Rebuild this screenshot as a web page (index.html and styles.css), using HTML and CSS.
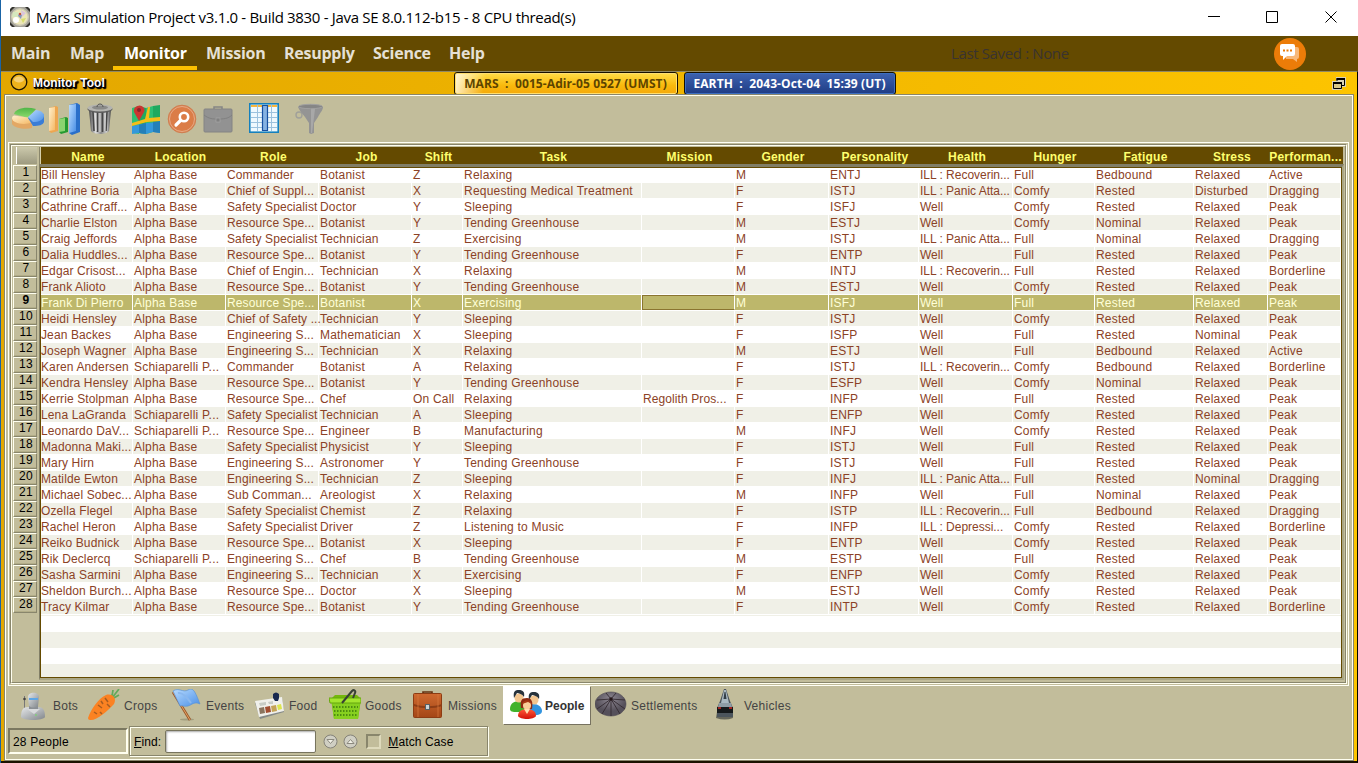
FILE: index.html
```html
<!DOCTYPE html>
<html lang="en">
<head>
<meta charset="utf-8">
<title>Mars Simulation Project</title>
<link rel="stylesheet" href="styles.css">
</head>
<body>
<svg width="0" height="0" class="defs">
  <defs>
    <linearGradient id="gBlue" x1="0" x2="1" y1="0" y2="1"><stop offset="0" stop-color="#b9dcff"/><stop offset="1" stop-color="#4a8fe6"/></linearGradient>
    <linearGradient id="gPeach" x1="0" x2="1" y1="0" y2="1"><stop offset="0" stop-color="#fff0cc"/><stop offset="1" stop-color="#f5b865"/></linearGradient>
    <linearGradient id="gGreen" x1="0" x2="0" y1="0" y2="1"><stop offset="0" stop-color="#4fb548"/><stop offset="1" stop-color="#8edc6e"/></linearGradient>
    <linearGradient id="gSteel" x1="0" x2="1"><stop offset="0" stop-color="#444"/><stop offset=".3" stop-color="#ddd"/><stop offset=".55" stop-color="#888"/><stop offset=".8" stop-color="#ccc"/><stop offset="1" stop-color="#444"/></linearGradient>
    <linearGradient id="gBot" x1="0" x2="1" y1="0" y2="1"><stop offset="0" stop-color="#e6e8ea"/><stop offset="1" stop-color="#80858a"/></linearGradient>
    <radialGradient id="gDome" cx=".5" cy=".3"><stop offset="0" stop-color="#8d8792"/><stop offset="1" stop-color="#55505a"/></radialGradient>
    <linearGradient id="gRed" x1="0" x2="0" y1="0" y2="1"><stop offset="0" stop-color="#ff5a3a"/><stop offset="1" stop-color="#d31208"/></linearGradient>
    <linearGradient id="gCase" x1="0" x2="0" y1="0" y2="1"><stop offset="0" stop-color="#cf6a30"/><stop offset="1" stop-color="#a44616"/></linearGradient>
  </defs>
</svg>
<div class="window">
  <header class="titlebar">
    <svg class="app-icon" viewBox="0 0 20 20"><path d="M0 3l3-3h14l3 3v14l-3 3H3l-3-3z" fill="#a3a198"/><path d="M0 5V2l2-2h3zM15 0h3l2 2v3zM0 15v3l2 2h3zM20 15v3l-2 2h-3z" fill="#35342f"/><circle cx="10" cy="10" r="9" fill="#cfcbb4"/><circle cx="10" cy="10" r="7.600" fill="#ece7b8"/><path d="M3 5h5v5H2z" fill="#d5e7bd"/><path d="M11 3l5 3-4 4z" fill="#d9c4dd"/><circle cx="6" cy="13" r="3" fill="#fff"/><path d="M11 12l5-1-3 5z" fill="#d8de6f"/><path d="M9 6l3 2-1 4-3-3z" fill="#8797bd"/><circle cx="10" cy="7" r="1.200" fill="#c9533c"/></svg>
    <span class="app-title">Mars Simulation Project v3.1.0 - Build 3830 - Java SE 8.0.112-b15 - 8 CPU thread(s)</span>
    <svg class="win-buttons" viewBox="0 0 130 16"><path d="M1 7.500h12M59.500 2.500h11v11h-11zM118.500 2.500l11 11M129.500 2.500l-11 11" fill="none" stroke="#000"/></svg>
  </header>
  <nav class="menubar">
    <span class="menu m-main">Main</span><span class="menu m-map">Map</span><span class="menu m-monitor active">Monitor</span><span class="menu m-mission">Mission</span><span class="menu m-resupply">Resupply</span><span class="menu m-science">Science</span><span class="menu m-help">Help</span>
    <span class="saved">Last Saved : None</span>
    <svg class="chat" viewBox="0 0 32 32"><circle cx="16" cy="16" r="16" fill="#ec7c08"/><path d="M12 9h11q2 0 2 2v8q0 2-2 2v3l-4-3h-7z" fill="#f8b878"/><path d="M8 6h11q2 0 2 2v8q0 2-2 2h-6l-4 4v-4H8q-2 0-2-2V8q0-2 2-2z" fill="#fff"/><path d="M9 11.500h2v2H9zM12.500 11.500h2v2h-2zM16 11.500h2v2h-2z" fill="#ec7c08"/></svg>
  </nav>
  <main class="desktop">
    <div class="toolbar-title">
      <svg class="orb" viewBox="0 0 18 18"><circle cx="9" cy="9" r="7.800" fill="#edb21c" stroke="#1a1300" stroke-width="1.300"/><ellipse cx="9" cy="6.500" rx="5" ry="3" fill="#f5cf72"/></svg>
      <span class="tool-name">Monitor Tool</span>
      <span class="clock mars">MARS&nbsp; :&nbsp; 0015-Adir-05 0527 (UMST)</span>
      <span class="clock earth">EARTH&nbsp; :&nbsp; 2043-Oct-04&nbsp; 15:39 (UT)</span>
      <svg class="restore" viewBox="0 0 14 13"><path d="M0 4h4V0h10v10h-4v3H0z" fill="#d9d2b8"/><path d="M5 4V1.500h7.500v7H10" fill="none" stroke="#000"/><path d="M4.500 1H13v2H4.500z"/><path d="M1.500 5.500h8v6h-8z" fill="#d9c88a" stroke="#000"/><path d="M1 5h9v2H1z"/></svg>
    </div>
    <div class="frame">
      <div class="tools">
        <svg class="t-pie" viewBox="0 0 32 32"><path d="M0 15v6c2 4 13 6 20 4v-7z" fill="#e3a864"/><path d="M2 11c1-5 11-8 22-5l-8 9z" fill="url(#gGreen)"/><path d="M0 15q0-2 2-2.500l14 2 4 5c-8 3-20 1-20-4.500z" fill="url(#gPeach)"/><path d="M16 15l8-7c7 1 9 4 8 7v4c-1 3-5 4-11 4z" fill="#3a7dd6"/><path d="M16 14l8-7c7 1 8 4 8 6-1 4-5 6-11 6z" fill="url(#gBlue)"/></svg>
        <svg class="t-bar" viewBox="0 0 32 32"><path d="M1 5l7-2 2 1v24l-7 2-2-2z" fill="#eda650"/><path d="M1 5l6-1v23l-6 1z" fill="url(#gPeach)"/><path d="M11 16l7-2 2 1v14l-7 2-2-2z" fill="#259a30"/><path d="M11 16l6-1v13l-6 1z" fill="#8bd470"/><path d="M21 2l8-2 3 2v27l-8 3-3-2z" fill="#2a6fc9"/><path d="M21 2l7-1v27l-7 2z" fill="url(#gBlue)"/></svg>
        <svg class="t-trash" viewBox="0 0 28 32"><path d="M3 7h22l-2 21c-3 4-15 4-18 0z" fill="url(#gSteel)"/><path d="M7 9l1 19M11.500 9v20M16.500 9v20M21 9l-1 19" stroke="#454545" stroke-width="1.600"/><path d="M9 9l1 19M14 9v20M19 9v19" stroke="#ddd"/><ellipse cx="14" cy="6" rx="12.500" ry="4" fill="#5d5d5d"/><ellipse cx="14" cy="5" rx="12.500" ry="3.500" fill="#b4b4b0"/><ellipse cx="14" cy="4.500" rx="8" ry="2" fill="#8a8a88"/><path d="M11 4c0-4 6-4 6 0" stroke="#555" fill="none"/></svg>
        <svg class="t-map" viewBox="0 0 28 30"><path d="M0 4l7-2v28l-7-1z" fill="#2ebf72"/><path d="M7 2l7 2v26l-7-1z" fill="#20a95f"/><path d="M14 4l7-2v26l-7 2z" fill="#2ebf72"/><path d="M21 2l7-1v26l-7 1z" fill="#20a95f"/><path d="M0 22l15-3 13-1v11l-7-1-7 2-7-1-7 1z" fill="#3498db"/><path d="M7 21l7-2v11l-7-1zM21 18l7-1v12l-7-1z" fill="#257fb8"/><path d="M0 19l13-4 3-12h2l-1 11 11-1v4l-13 1-15 4z" fill="#f5bd18"/><path d="M7 17L2 8a5.500 5.500 0 0110-4q1 2 0 4z" fill="#c93632"/><circle cx="7" cy="6" r="2" fill="#86242a"/></svg>
        <svg class="t-find" viewBox="0 0 30 30"><circle cx="15" cy="15" r="13.800" fill="#db7d48" stroke="#cf7d50"/><circle cx="15" cy="15" r="12.500" fill="none" stroke="#e9b596" stroke-width=".8"/><circle cx="17" cy="13" r="4.200" fill="none" stroke="#fff" stroke-width="2.600"/><path d="M13.500 16.500l-4.500 4.500" stroke="#fff" stroke-width="3.200" stroke-linecap="round"/></svg>
        <svg class="t-case" viewBox="0 0 30 27"><path d="M11 3V1h8v2" fill="none" stroke="#858585" stroke-width="1.500"/><rect x="1" y="3" width="28" height="23" rx="1" fill="#929292" stroke="#848484"/><path d="M1 9c5 4 9 4 14 4s10 0 14-4" fill="none" stroke="#808080"/><rect x="13" y="12" width="4" height="4" fill="#808080" stroke="#aaa" stroke-width=".6"/></svg>
        <svg class="t-grid" viewBox="0 0 30 30"><rect x=".8" y=".8" width="28.400" height="28.400" fill="#eff9fe" stroke="#1580bd" stroke-width="1.600"/><path d="M2 2h26v2H2z" fill="#f6b63d"/><path d="M2 9.500h26M2 14.500h26M2 19.500h26M2 24.500h26M8.500 2v26M22.500 2v26" stroke="#9cc2de"/><path d="M13.500 2.500h5v25h-5z" fill="#86b2e2" stroke="#174fa0" stroke-width="1.200"/></svg>
        <svg class="t-funnel" viewBox="0 0 30 32"><circle cx="4" cy="12" r="3" fill="none" stroke="#a0a09a" stroke-width="1.400"/><path d="M3 4h25c0 3-3 6-5 10l-4 6v10l-3 1-2-1V20l-4-6C7 10 4 7 3 4z" fill="#949494"/><path d="M16 6h4l-3 24h-1z" fill="#a8a8a8"/><ellipse cx="15.500" cy="3.500" rx="12" ry="2.200" fill="#868686" stroke="#a1a1a1"/></svg>
      </div>
      <section class="panel"><div class="etch"><div class="etch-in">
        <div class="row-head"><div class="corner"></div><div id="nums"></div></div>
        <div class="table">
          <div class="grid head" id="head"></div>
          <div class="body-frame"><div class="body" id="body"></div></div>
        </div>
      </div></div></section>
      <div class="tabs">
        <div class="tab w1"><svg viewBox="0 0 32 32"><path d="M7.500 7v15" stroke="#777"/><circle cx="7.500" cy="10" r="1.300" fill="#444"/><path d="M4 28c0-7 2-10 7-10h10c5 0 7 3 7 10-2 4-22 4-24 0z" fill="url(#gBot)"/><path d="M12 15h9v6h-9z" fill="#8b9095"/><path d="M11 9c-1-7 12-7 11 0l-1 8q-4.500 3-9 0z" fill="url(#gBot)"/><path d="M12 9h9v2h-9z" fill="#5fa6e4"/><path d="M10 20h13l-6 5z" fill="#d8dadc"/><circle cx="19" cy="26" r="1" fill="#7fce7a"/></svg><span>Bots</span></div>
        <div class="tab w2"><svg viewBox="0 0 32 32"><path d="M22 10c3-4 3-6 3-9M24 9l7-9M24 10l7-4" stroke="#62a95a" stroke-width="1.700" fill="none"/><path d="M0 29C3 20 11 9 18 6c7-2 11 4 8 9C20 22 8 32 2 31q-2 0-2-2z" fill="#fb8222"/><path d="M10 16l4 3M17 9l3 4M22 18l-3-3M6 23l3 2M14 25l-2-2M13 12l2 3" stroke="#a75c20" stroke-width="1.500"/></svg><span>Crops</span></div>
        <div class="tab w3"><svg viewBox="0 0 32 32"><ellipse cx="17" cy="30.500" rx="7" ry="1" fill="#a19d7e"/><path d="M3 3l17 28" stroke="#9b562b" stroke-width="2.600"/><path d="M3 3l17 28" stroke="#e2a462" stroke-width="1"/><path d="M3 2c6-4 10 2 15-1s7 1 12 14c-6-3-8 1-12 2s-6-1-8 0z" fill="url(#gBlue)" stroke="#5c93d3" stroke-width=".7"/><path d="M8 4c5-1 9 4 13 10" stroke="#8ab8ee" stroke-width="2" fill="none"/></svg><span>Events</span></div>
        <div class="tab w4"><svg viewBox="0 0 32 32"><path d="M2 14l27-5 2 14-24 7z" fill="#858a88"/><path d="M2 12l27-4 2 14-25 6z" fill="#f0f0eb"/><path d="M6 19l5-1 1 6-5 1z" fill="#8a755f"/><path d="M12 18l5-1 1 6-5 1z" fill="#a24e31"/><path d="M18 17l5-1 1 6-5 1z" fill="#c5a355"/><path d="M24 16l4-1 1 5-4 1z" fill="#dce64e"/><path d="M6 14l7-1v3l-6 1zM15 13l5-1v3h-4z" fill="#c8ccc5"/><path d="M20 5q3-3 6 0v4l-1 3h-3l-2-3z" fill="#19294f"/></svg><span>Food</span></div>
        <div class="tab w5"><svg viewBox="0 0 32 32"><path d="M2 10l4-4h22l4 4-3 20H5z" fill="#75b80c"/><path d="M3 14h28l-2 16H5z" fill="#86d01f"/><path d="M0 9h32v5H1z" fill="#a4e62e" stroke="#66a60e"/><path d="M4 18h25M5 22h24M5 26h23" stroke="#4d8c10" stroke-width="1.800" stroke-dasharray="1.500 1.500"/><path d="M13 14L23 2c2-2 4 0 3 2l-2 5" stroke="#384035" stroke-width="2" fill="none"/></svg><span>Goods</span></div>
        <div class="tab w6"><svg viewBox="0 0 32 32"><path d="M11 5V3h9v2" fill="none" stroke="#64300f" stroke-width="1.600"/><rect x="1.500" y="4.500" width="28" height="24" rx="1" fill="url(#gCase)" stroke="#8d3c13"/><path d="M2 15c8 3 20 3 28 0v2c-8 3-20 3-28 0z" fill="#8d3d16"/><path d="M6 5v23M26 5v23" stroke="#d97b41" stroke-width=".7"/><rect x="13.500" y="15.500" width="4" height="5" fill="#ccd4d6" stroke="#566065"/></svg><span>Missions</span></div>
        <div class="tab w7 selected"><svg viewBox="0 0 32 32"><path d="M0 19c0-6 5-8 9-8s8 3 8 7l-5 4c-5 0-12 1-12-3z" fill="#41b22b"/><path d="M16 21c0-6 4-7 8-7s8 3 8 7c0 5-10 5-16 3z" fill="#3294df"/><circle cx="9" cy="8" r="4.500" fill="#f3c58e"/><path d="M4 8c-1-7 1-8 5-8s6 2 5 7c-2-3-5-4-7-4z" fill="#28333c"/><circle cx="24" cy="10" r="4.500" fill="#f3c58e"/><path d="M19 10c-1-7 1-8 5-8s6 2 5 7c-2-3-5-4-7-4z" fill="#28333c"/><path d="M11 18c-1-7 0-10 6-10 5 0 6 4 5 11z" fill="#8d2a12"/><circle cx="17" cy="15.500" r="4" fill="#f9cf98"/><path d="M12 14c2-5 8-5 10 0l-4-2z" fill="#aa3914"/><path d="M8 26c0-5 4-7 9-7s9 2 9 7c-2 4-16 4-18 0z" fill="url(#gRed)"/><path d="M14 19h6l-3 5z" fill="#ffe0b0"/></svg><span>People</span></div>
        <div class="tab w8"><svg viewBox="0 0 32 32"><path d="M0 15C0 8 8 3 16 3s15 5 15 12-7 12-15 12S0 22 0 15z" fill="url(#gDome)" stroke="#4b4650" stroke-width=".6"/><path d="M16 10L2 11M16 10L2 20M16 10L7 25M16 10v17M16 10l9 15M16 10l14 10M16 10l14 1M16 10l-5-6M16 10l5-6" stroke="#332a31" stroke-width=".9"/><circle cx="16" cy="10" r="1.700" fill="#251619"/></svg><span>Settlements</span></div>
        <div class="tab w9"><svg viewBox="0 0 32 32"><path d="M9 23q7-3 15 0l1 6q-8 3-17 0z" fill="#66675a"/><path d="M16 0h2l4 12 3 7v9H9v-9l3-7z" fill="#4c555c"/><path d="M16 1h2l3 13h-8z" fill="#a9b8c0"/><path d="M16.500 3h1l1 7h-3z" fill="#333e46"/><path d="M11 14h12l1 4H10z" fill="#8e9ca5"/><path d="M9 18h16v6H9z" fill="#15191b"/><path d="M10 18h3v2h-3zM21 18h3v2h-3z" fill="#a02723"/></svg><span>Vehicles</span></div>
      </div>
      <div class="status">
        <div class="count">28 People</div>
        <div class="finder">
          <span><u>F</u>ind:</span><div class="field"></div>
          <svg class="rnd" viewBox="0 0 15 15"><circle cx="7.500" cy="7.500" r="6.500" fill="#d0cfc3" stroke="#85837a"/><path d="M4 5.500h7l-3.500 4z" fill="#f3f2e8" stroke="#8b897e"/></svg>
          <svg class="rnd" viewBox="0 0 15 15"><circle cx="7.500" cy="7.500" r="6.500" fill="#d0cfc3" stroke="#85837a"/><path d="M4 9.500h7l-3.500-4z" fill="#f3f2e8" stroke="#8b897e"/></svg>
          <div class="check"></div><span><u>M</u>atch Case</span>
        </div>
      </div>
    </div>
  </main>
</div>
<script src="table.js"></script>
</body>
</html>
```

FILE: styles.css
```css
* { box-sizing: border-box; }
body { margin: 0; overflow: hidden; font: 12px "Liberation Sans", Arial, sans-serif; color: #333; }
svg { display: block; flex: none; }
.defs { position: absolute; }
.window { width: 1358px; height: 763px; display: flex; flex-direction: column; background: #fff; border-left: 1px solid #1a64a6; }
.titlebar { height: 36px; flex: none; display: flex; align-items: center; padding-left: 9px; padding-bottom: 2px; color: #000; }
.app-icon { width: 20px; height: 20px; }
.app-title { margin-left: 6px; font: 15px "Open Sans", sans-serif; white-space: nowrap; letter-spacing: -.32px; }
.win-buttons { width: 130px; height: 16px; margin-left: auto; margin-right: 21px; }
.menubar { height: 35px; flex: none; background: #644a00; display: flex; padding-left: 10px; font: bold 16px/35px "Open Sans", sans-serif; letter-spacing: -.25px; color: #e5e0d5; white-space: nowrap; }
.menu { height: 34px; flex: none; }
.m-main { width: 59px; }
.m-map { width: 43px; }
.m-monitor { width: 84px; padding-left: 11px; }
.m-mission { width: 87px; padding-left: 9px; }
.m-resupply { width: 89px; }
.m-science { width: 76px; }
.m-help { width: 50px; }
.active { color: #fff; border-bottom: 4px solid #fcc000; }
.saved { font-weight: 400; font-size: 15px; letter-spacing: -.36px; color: #393330; margin-left: 452px; width: 323px; }
.chat { width: 32px; height: 32px; margin-top: 2px; }
.desktop { height: 692px; padding: 0 3px; border-top: 1px solid #8f8865; border-right: 1px solid #000; border-bottom: 2px solid #1b1200; background: linear-gradient(90deg, #e3a700, #fdc400); display: flex; flex-direction: column; }
.toolbar-title { height: 22px; flex: none; display: flex; align-items: center; padding-left: 6px; }
.orb { width: 18px; height: 18px; margin-top: -2px; }
.tool-name { margin-left: 5px; width: 421px; color: #fff; font-weight: bold; font-size: 12px; text-shadow: 1px 1px 1px #000, 2px 1px 1px #000, 1px 2px 1px #000, 2px 2px 1px #000, 0 1px #000; }
.clock { height: 23px; border: 1px solid #171000; border-radius: 3px; font: bold 12px/21px "Open Sans", sans-serif; letter-spacing: .09px; text-align: center; white-space: nowrap; padding-right: 1px; }
.mars { width: 224px; color: #5d4400; background: linear-gradient(100deg, #fff6d8, rgba(255,240,180,0) 14%), linear-gradient(#ffdd48, #f9b90c 60%, #f5a90b); box-shadow: inset 0 0 0 1px #ffdf70; }
.earth { margin-left: 6px; width: 212px; color: #fff; background: linear-gradient(#3e62b0, #1e3c84); box-shadow: inset 0 0 0 1px #3c6ec0; }
.restore { width: 14px; height: 13px; margin-left: auto; margin-right: 8px; }
.frame { flex: 1; min-height: 0; background: #c2bd9b; border: 1px solid #89866c; box-shadow: inset 0 0 0 1px #fffff0; padding: 1px; display: flex; flex-direction: column; }
.tools { height: 46px; flex: none; display: flex; align-items: center; padding-left: 6px; }
.t-pie { width: 32px; height: 32px; }
.t-bar { width: 32px; height: 32px; margin-left: 4px; }
.t-trash { width: 28px; height: 32px; margin-left: 6px; }
.t-map { width: 28px; height: 30px; margin-left: 18px; }
.t-find { width: 30px; height: 30px; margin-left: 7px; }
.t-case { width: 30px; height: 27px; margin-left: 6px; }
.t-grid { width: 30px; height: 30px; margin: -2px 0 0 16px; }
.t-funnel { width: 30px; height: 32px; margin-left: 16px; }
.panel { margin-left: 2px; width: 1341px; height: 544px; flex: none; border: 1px solid #fffff5; padding: 1px; }
.etch { height: 100%; border: 1px solid; border-color: #89866c #fffff0 #fffff0 #89866c; }
.etch-in { height: 100%; border: 1px solid; border-color: #fffff0 #89866c #89866c #fffff0; display: flex; padding: 1px 0 0 1px; }
.row-head { width: 26px; flex: none; }
.corner { margin-left: 3px; width: 21px; height: 17px; border-left: 1px solid #fff; background: linear-gradient(#ccc9ac, #9d9a80); margin-bottom: 1px; }
.num { height: 16px; width: 24px; border: 1px solid; border-color: #fffff0 #89866c #89866c #fffff0; line-height: 13px; text-align: center; color: #000; padding-left: 2px; box-shadow: inset 0 -1px #b2ad88; letter-spacing: .3px; }
.num.sel { font-weight: bold; }
.table { flex: 1; min-width: 0; display: flex; flex-direction: column; }
.grid { display: grid; grid-template-columns: 92px 93px 93px 93px 51px 179px 93px 94px 90px 94px 82px 99px 74px 73px; }
.head { height: 17px; background: #644a00; color: #ffff6e; font: bold 12px/21px "Liberation Sans", sans-serif; letter-spacing: .2px; text-align: center; padding-left: 3px; box-shadow: inset 1px 0 #89866c, inset 2px 0 #d6d0aa; width: 1304px; }
.head span { white-space: nowrap; }
.body-frame { flex: 1; min-height: 0; margin-bottom: 2px; margin-right: 1px; border: 2px solid #89866c; border-width: 3px 2px 2px 1px; border-color: #817e66 #aaa685 #aaa685 #817e66; }
.body { height: 100%; overflow: hidden; border: 1px solid #644a00; background: repeating-linear-gradient(#fff 0 16px, #f0f0e7 16px 32px); color: #8b4226; }
.row { height: 16px; border-bottom: 1px solid #fff; line-height: 17px; letter-spacing: .2px; white-space: nowrap; }
.row:first-child { height: 15px; line-height: 14px; }
.row span { height: 15px; padding-left: 1px; border-right: 1px solid #fff; }
.row span:first-child { padding-left: 0; letter-spacing: .12px; }
.row span:nth-child(3), .row span:nth-child(7) { letter-spacing: .1px; }
.row span:nth-child(6) { letter-spacing: .22px; }
.row span:nth-child(10) { letter-spacing: -.02px; }
.row:nth-child(odd) { background: #fff; }
.row:nth-child(even) { background: #f0f0e7; }
.row.sel { background: #bdb76b; color: #ffffd8; }
.row.sel .focus { border: 1px solid #8a7530; border-right-color: #fff; }
.tabs { height: 39px; flex: none; display: flex; padding-left: 11px; color: #444; letter-spacing: .28px; }
.tab { height: 38px; display: flex; align-items: center; gap: 4px; white-space: nowrap; flex: none; }
.tab svg { width: 32px; height: 32px; }
.tab span { padding-top: 2px; }
.w1 { width: 71px; } .w2 { width: 82px; } .w3 { width: 83px; } .w4 { width: 76px; } .w5 { width: 83px; } .w6 { width: 91px; }
.w7 { width: 87px; padding-left: 7px; gap: 3px; } .w8 { width: 118px; padding-left: 5px; } .w9 { width: 90px; }
.w7 svg { margin-top: 1px; }
.selected { background: #fff; font-weight: bold; color: #333; letter-spacing: 0; box-shadow: 1px 1px #777260; }
.status { display: flex; padding-left: 2px; margin-top: 1px; color: #000; letter-spacing: .2px; align-items: center; }
.count { width: 120px; height: 26px; border: 2px solid; border-color: #7b7860 #fffff0 #fffff0 #7b7860; padding-left: 3px; line-height: 24px; }
.finder { margin-left: 1px; width: 359px; height: 30px; border: 1px solid #89866c; box-shadow: inset 1px 1px #fffff0, 1px 1px #fffff0; display: flex; align-items: center; padding-left: 4px; }
.finder span { padding-top: 2px; letter-spacing: .12px; }
.field { margin-left: 4px; width: 151px; height: 23px; border: 1px solid #77745d; border-radius: 2px; background: #fff; box-shadow: inset 1px 1px 2px #aaa; }
.rnd { width: 15px; height: 15px; margin-left: 7px; }
.rnd + .rnd { margin-left: 5px; }
.check { width: 15px; height: 15px; margin: 0 7px 0 8px; border: 2px solid; border-color: #89866c #dedabc #dedabc #89866c; }
```

FILE: table.js
```js
const heads = ["Name", "Location", "Role", "Job", "Shift", "Task", "Mission", "Gender", "Personality", "Health", "Hunger", "Fatigue", "Stress", "Performan..."];
const data = `Bill Hensley|Alpha Base|Commander|Botanist|Z|Relaxing||M|ENTJ|ILL : Recoverin...|Full|Bedbound|Relaxed|Active
Cathrine Boria|Alpha Base|Chief of Suppl...|Botanist|X|Requesting Medical Treatment||F|ISTJ|ILL : Panic Atta...|Comfy|Rested|Disturbed|Dragging
Cathrine Craff...|Alpha Base|Safety Specialist|Doctor|Y|Sleeping||F|ISFJ|Well|Comfy|Rested|Relaxed|Peak
Charlie Elston|Alpha Base|Resource Spe...|Botanist|Y|Tending Greenhouse||M|ESTJ|Well|Comfy|Nominal|Relaxed|Peak
Craig Jeffords|Alpha Base|Safety Specialist|Technician|Z|Exercising||M|ISTJ|ILL : Panic Atta...|Full|Nominal|Relaxed|Dragging
Dalia Huddles...|Alpha Base|Resource Spe...|Botanist|Y|Tending Greenhouse||F|ENTP|Well|Full|Rested|Relaxed|Peak
Edgar Crisost...|Alpha Base|Chief of Engin...|Technician|X|Relaxing||M|INTJ|ILL : Recoverin...|Full|Rested|Relaxed|Borderline
Frank Alioto|Alpha Base|Resource Spe...|Botanist|Y|Tending Greenhouse||M|ESTJ|Well|Comfy|Rested|Relaxed|Peak
Frank Di Pierro|Alpha Base|Resource Spe...|Botanist|X|Exercising||M|ISFJ|Well|Full|Rested|Relaxed|Peak
Heidi Hensley|Alpha Base|Chief of Safety ...|Technician|Y|Sleeping||F|ISTJ|Well|Comfy|Rested|Relaxed|Peak
Jean Backes|Alpha Base|Engineering S...|Mathematician|X|Sleeping||F|ISFP|Well|Full|Rested|Nominal|Peak
Joseph Wagner|Alpha Base|Engineering S...|Technician|X|Relaxing||M|ESTJ|Well|Full|Bedbound|Relaxed|Active
Karen Andersen|Schiaparelli P...|Commander|Botanist|A|Relaxing||F|ISTJ|ILL : Recoverin...|Comfy|Bedbound|Relaxed|Borderline
Kendra Hensley|Alpha Base|Resource Spe...|Botanist|Y|Tending Greenhouse||F|ESFP|Well|Comfy|Nominal|Relaxed|Peak
Kerrie Stolpman|Alpha Base|Resource Spe...|Chef|On Call|Relaxing|Regolith Pros...|F|INFP|Well|Full|Rested|Relaxed|Peak
Lena LaGranda|Schiaparelli P...|Safety Specialist|Technician|A|Sleeping||F|ENFP|Well|Comfy|Rested|Relaxed|Peak
Leonardo DaV...|Schiaparelli P...|Resource Spe...|Engineer|B|Manufacturing||M|INFJ|Well|Comfy|Rested|Relaxed|Peak
Madonna Maki...|Alpha Base|Safety Specialist|Physicist|Y|Sleeping||F|ISTJ|Well|Full|Rested|Relaxed|Peak
Mary Hirn|Alpha Base|Engineering S...|Astronomer|Y|Tending Greenhouse||F|ISTJ|Well|Full|Rested|Relaxed|Peak
Matilde Ewton|Alpha Base|Engineering S...|Technician|Z|Sleeping||F|INFJ|ILL : Panic Atta...|Full|Rested|Nominal|Dragging
Michael Sobec...|Alpha Base|Sub Comman...|Areologist|X|Relaxing||M|INFP|Well|Full|Nominal|Relaxed|Peak
Ozella Flegel|Alpha Base|Safety Specialist|Chemist|Z|Relaxing||F|ISTP|ILL : Recoverin...|Full|Bedbound|Relaxed|Dragging
Rachel Heron|Alpha Base|Safety Specialist|Driver|Z|Listening to Music||F|INFP|ILL : Depressi...|Comfy|Rested|Relaxed|Borderline
Reiko Budnick|Alpha Base|Resource Spe...|Botanist|X|Sleeping||F|ENTP|Well|Comfy|Rested|Relaxed|Peak
Rik Declercq|Schiaparelli P...|Engineering S...|Chef|B|Tending Greenhouse||M|ESTP|Well|Full|Rested|Relaxed|Peak
Sasha Sarmini|Alpha Base|Engineering S...|Technician|X|Exercising||F|ENFP|Well|Comfy|Rested|Relaxed|Peak
Sheldon Burch...|Alpha Base|Resource Spe...|Doctor|X|Sleeping||M|ESTJ|Well|Comfy|Rested|Relaxed|Peak
Tracy Kilmar|Alpha Base|Resource Spe...|Botanist|Y|Tending Greenhouse||F|INTP|Well|Comfy|Rested|Relaxed|Borderline`.split("\n");
const selected = 8;
const cells = (list, mark) => list.map((t, i) => `<span${mark && i === 6 ? ' class="focus"' : ""}>${t}</span>`).join("");
document.getElementById("head").innerHTML = cells(heads);
document.getElementById("body").innerHTML = data.map((r, i) =>
  `<div class="grid row${i === selected ? " sel" : ""}">${cells(r.split("|"), i === selected)}</div>`).join("");
document.getElementById("nums").innerHTML = data.map((r, i) =>
  `<div class="num${i === selected ? " sel" : ""}">${i + 1}</div>`).join("");
```
